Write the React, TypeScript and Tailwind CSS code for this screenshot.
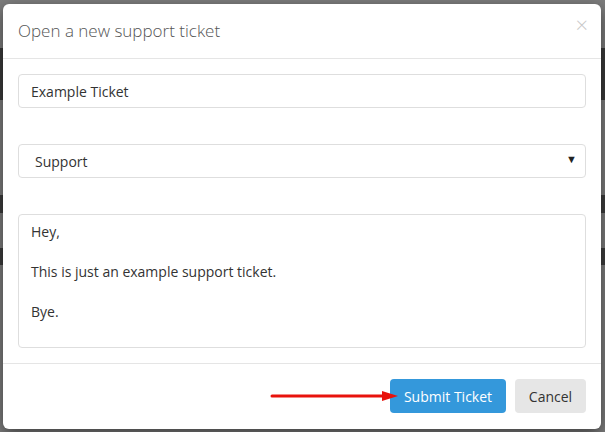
import React from "react";

const font = { fontFamily: '"Open Sans", "Noto Sans", sans-serif' };

function Backdrop() {
  // the page behind the modal, dimmed
  return (
    <div className="flex flex-col">
      <div className="mt-[48px] h-[52px] bg-[#3b3b3b]" />
      <div className="mt-[95px] h-[18px] bg-[#3d3d3d]" />
      <div className="mt-[35px] h-[17px] bg-[#3d3d3d]" />
    </div>
  );
}

function Arrow() {
  return (
    <svg
      className="absolute left-[270px] top-[389px]"
      width="130"
      height="14"
      viewBox="0 0 130 14"
    >
      <line x1="2" y1="7" x2="116" y2="7" stroke="#e8120c" strokeWidth="3" strokeLinecap="round" />
      <polygon points="112,2 128,7 112,12" fill="#e8120c" />
    </svg>
  );
}

export default function App() {
  return (
    <div className="relative h-[432px] w-[605px] overflow-hidden bg-[#7d7d7d]" style={font}>
      <Backdrop />

      <div className="absolute left-[3px] top-[4px] w-[598px] rounded-[6px] bg-white shadow-[0_5px_15px_rgba(0,0,0,0.5)]">
        <div className="relative flex h-[55px] items-center border-b border-[#e5e5e5] px-[15px]">
          <h4 className="text-[17px] font-light leading-[26px] text-[#555]">Open a new support ticket</h4>
          <button className="absolute right-[13px] top-[9px] text-[22px] font-light leading-none text-[#c8c8c8]">
            ×
          </button>
        </div>

        <div className="flex flex-col gap-[36px] border-b border-[#e5e5e5] p-[15px]">
          <input
            defaultValue="Example Ticket"
            className="h-[34px] w-full rounded-[4px] border border-[#dedede] px-[12px] text-[14px] text-[#333] outline-none"
          />
          <div className="relative">
            <select
              defaultValue="support"
              className="h-[34px] w-full appearance-none rounded-[4px] border border-[#dedede] bg-white pl-[16px] text-[14px] text-[#333] outline-none"
            >
              <option value="support">Support</option>
            </select>
            <span className="pointer-events-none absolute right-[9px] top-[9px] text-[11px] leading-none text-[#222]">
              ▼
            </span>
          </div>
          <textarea
            defaultValue={"Hey,\n\nThis is just an example support ticket.\n\nBye."}
            className="h-[134px] w-full resize-none rounded-[4px] border border-[#dedede] px-[12px] py-[7px] text-[14px] leading-[20px] text-[#333] outline-none"
          />
        </div>

        <div className="flex justify-end gap-[9px] px-[15px] pb-[16px] pt-[15px]">
          <button className="h-[34px] w-[116px] rounded-[4px] bg-[#3498db] text-[14px] text-white">
            Submit Ticket
          </button>
          <button className="h-[34px] w-[71px] rounded-[4px] bg-[#e6e6e6] text-[14px] text-[#333]">
            Cancel
          </button>
        </div>
      </div>

      <Arrow />
    </div>
  );
}
